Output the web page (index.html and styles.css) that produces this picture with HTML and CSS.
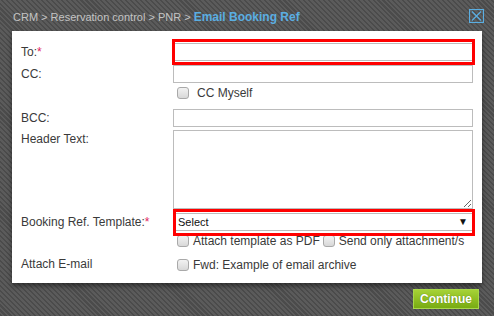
FILE: index.html
```html
<!DOCTYPE html>
<html lang="en">

<head>
    <meta charset="UTF-8">
    <title>Email Booking Ref</title>
    <link rel="stylesheet" href="styles.css">
</head>

<body>
    <div class="dialog">
        <div class="dialog-head">
            <div class="crumbs">CRM &gt; Reservation control &gt; PNR &gt; <span class="current">Email Booking Ref</span></div>
            <span class="close">
                <svg width="15" height="14" viewBox="0 0 15 14">
                    <rect x="0.5" y="0.5" width="14" height="13" fill="none" stroke="#5aaee2" stroke-width="1.2"/>
                    <path d="M3 2.5 L12 11.5 M12 2.5 L3 11.5" stroke="#5aaee2" stroke-width="1.2"/>
                </svg>
            </span>
        </div>

        <form class="panel">
            <div class="row row-to">
                <label>To:<span class="req">*</span></label>
                <div class="field">
                    <input type="text">
                    <span class="mark mark-to"></span>
                </div>
            </div>
            <div class="row">
                <label>CC:</label>
                <div class="field"><input type="text"></div>
            </div>
            <div class="row row-check">
                <label></label>
                <div class="checks">
                    <span class="check cc-myself"><input type="checkbox"> CC Myself</span>
                </div>
            </div>
            <div class="row row-bcc">
                <label>BCC:</label>
                <div class="field"><input type="text"></div>
            </div>
            <div class="row row-text">
                <label>Header Text:</label>
                <div class="field"><textarea></textarea></div>
            </div>
            <div class="row row-select">
                <label>Booking Ref. Template:<span class="req">*</span></label>
                <div class="field select-wrap">
                    <select>
                        <option>Select</option>
                    </select>
                    <span class="arrow">&#9660;</span>
                    <span class="mark mark-select"></span>
                </div>
            </div>
            <div class="row row-check">
                <label></label>
                <div class="checks">
                    <span class="check"><input type="checkbox"> Attach template as PDF</span>
                    <span class="check"><input type="checkbox"> Send only attachment/s</span>
                </div>
            </div>
            <div class="row row-fwd">
                <label>Attach E-mail</label>
                <div class="checks">
                    <span class="check"><input type="checkbox"> Fwd: Example of email archive</span>
                </div>
            </div>
        </form>

        <div class="dialog-foot">
            <button type="button" class="btn-continue">Continue</button>
        </div>
    </div>
</body>

</html>
```

FILE: styles.css
```css
/* reset */
* {
    margin: 0;
    padding: 0;
    box-sizing: border-box;
}

body {
    width: 494px;
    height: 316px;
    overflow: hidden;
    font-family: Arial, "Liberation Sans", sans-serif;
    font-size: 12px;
    color: #333333;
    background-color: #535353;
    background-image: repeating-linear-gradient(45deg, #4b4b4b 0, #4b4b4b 1.5px, #5b5b5b 1.5px, #5b5b5b 3.5px);
}

.dialog {
    padding: 0 12px;
}

/* title bar */
.dialog-head {
    height: 31px;
    display: flex;
    align-items: center;
    justify-content: space-between;
    padding-left: 1px;
    padding-top: 3px;
}

.crumbs {
    font-size: 11px;
    color: #c4c4c4;
}

.crumbs .current {
    font-size: 12px;
    font-weight: bold;
    color: #5aaee2;
}

.close {
    display: flex;
    margin-right: -2px;
    margin-top: -3px;
}

/* white form area */
.panel {
    background-color: #ffffff;
    padding: 12px 9px 12px 9px;
    box-shadow: 0 3px 5px rgba(0, 0, 0, 0.45);
}

.row {
    display: grid;
    grid-template-columns: 152px 300px;
    align-items: center;
    margin-top: 4px;
}

.row-to {
    margin-top: 0;
}

.row label {
    color: #3a3a3a;
}

.req {
    color: #e0245e;
}

.field {
    position: relative;
}

.field input,
.field textarea,
.field select {
    display: block;
    width: 300px;
    height: 18px;
    border: 1px solid #bcbcbc;
    background: #ffffff;
    font-family: Arial, "Liberation Sans", sans-serif;
    font-size: 12px;
    outline: none;
}

.row-bcc {
    margin-top: 10px;
}

.row-text {
    margin-top: 3px;
    align-items: start;
}

.row-text label {
    padding-top: 2px;
}

.field textarea {
    height: 79px;
    resize: both;
}

/* select */
.field select {
    appearance: none;
    -webkit-appearance: none;
    padding-left: 4px;
    color: #111111;
    font-size: 11px;
}

.arrow {
    position: absolute;
    right: 5px;
    top: 3px;
    font-size: 10px;
    color: #111111;
    pointer-events: none;
}

/* red highlight boxes */
.mark {
    position: absolute;
    border: 3px solid #ff0000;
    pointer-events: none;
    z-index: 2;
}

.mark-to {
    left: -1px;
    right: -2px;
    top: -4px;
    bottom: -4px;
}

.mark-select {
    left: 0;
    right: -2px;
    top: -4px;
    bottom: -5px;
}

/* checkboxes */
.checks {
    display: flex;
    gap: 4px;
    padding-left: 4px;
}

.check {
    display: flex;
    align-items: center;
    gap: 4px;
    height: 12px;
    color: #3a3a3a;
}

.check:nth-child(2) {
    margin-left: -1px;
}

.check input {
    appearance: none;
    -webkit-appearance: none;
    width: 12px;
    height: 12px;
    border: 1px solid #a9a9a9;
    border-radius: 3px;
    background: linear-gradient(#f2f2f2, #d8d8d8);
}

.check.cc-myself {
    gap: 8px;
}

.row-fwd {
    margin-top: 12px;
}

.row-fwd label {
    margin-top: -3px;
}

/* footer */
.dialog-foot {
    display: flex;
    justify-content: flex-end;
    padding-top: 6px;
    padding-right: 3px;
}

.btn-continue {
    width: 66px;
    height: 20px;
    border: 1px solid #a8d84a;
    background: linear-gradient(#a6d236, #78ab12);
    color: #ffffff;
    font-family: Arial, "Liberation Sans", sans-serif;
    font-size: 12px;
    font-weight: bold;
    text-shadow: 0 0 1px #4a6e05;
    cursor: pointer;
}
```
